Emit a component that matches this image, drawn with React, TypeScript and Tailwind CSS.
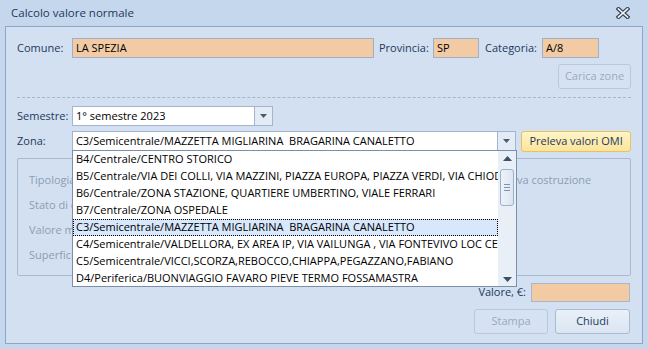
import React from "react";

const zones = [
  "B4/Centrale/CENTRO STORICO",
  "B5/Centrale/VIA DEI COLLI, VIA MAZZINI, PIAZZA EUROPA, PIAZZA VERDI, VIA CHIODO",
  "B6/Centrale/ZONA STAZIONE, QUARTIERE UMBERTINO, VIALE FERRARI",
  "B7/Centrale/ZONA OSPEDALE",
  "C3/Semicentrale/MAZZETTA MIGLIARINA  BRAGARINA CANALETTO",
  "C4/Semicentrale/VALDELLORA, EX AREA IP, VIA VAILUNGA , VIA FONTEVIVO LOC CERRETO",
  "C5/Semicentrale/VICCI,SCORZA,REBOCCO,CHIAPPA,PEGAZZANO,FABIANO",
  "D4/Periferica/BUONVIAGGIO FAVARO PIEVE TERMO FOSSAMASTRA",
];

const ArrowDown = () => (
  <svg width="7" height="4" viewBox="0 0 7 4">
    <path d="M0 0H7L3.5 4Z" fill="#4a5a70" />
  </svg>
);

const ArrowUp = () => (
  <svg width="9" height="5" viewBox="0 0 9 5">
    <path d="M0 5H9L4.5 0Z" fill="#3f4f66" />
  </svg>
);

const App = () => {
  const selected = 4;
  return (
    <div className="w-[648px] h-[349px] bg-[#c5d7ed] flex flex-col text-[11px] text-[#1e395b] overflow-hidden" style={{ fontFamily: "'Open Sans', 'Noto Sans', sans-serif" }}>
      {/* title bar */}
      <div className="h-[26px] flex items-center justify-between pl-[11px] pr-[18px] shrink-0">
        <span className="text-[11.5px] text-[#1e395b]">Calcolo valore normale</span>
        <svg width="14" height="12" viewBox="0 0 14 12">
          <path d="M2.5 2L11.5 10M11.5 2L2.5 10" stroke="#3b4658" strokeWidth="4" strokeLinecap="square" />
          <path d="M2.5 2L11.5 10M11.5 2L2.5 10" stroke="#f4f6f9" strokeWidth="1.6" strokeLinecap="square" />
        </svg>
      </div>

      {/* panel */}
      <div className="mx-[5px] h-[318px] border border-[#8ea6c6] bg-[#d3e0f1] pl-[11px] pr-[11px] pt-[11px] relative shrink-0">
        {/* row 1 */}
        <div className="flex items-center h-[20px]">
          <span className="w-[55px]">Comune:</span>
          <div className="w-[302px] h-[20px] bg-[#f2cba5] border border-[#9fb0c6] pl-[3px] flex items-center text-black">LA SPEZIA</div>
          <span className="w-[54px] ml-[5px]">Provincia:</span>
          <div className="w-[46px] h-[20px] bg-[#f2cba5] border border-[#9fb0c6] pl-[3px] flex items-center text-black">SP</div>
          <span className="w-[57px] ml-[6px]">Categoria:</span>
          <div className="w-[57px] h-[20px] bg-[#f2cba5] border border-[#9fb0c6] pl-[3px] flex items-center text-black">A/8</div>
        </div>

        <div className="flex justify-end mt-[6px]">
          <button className="w-[73px] h-[25px] rounded-[3px] border border-[#b9c8da] bg-[#d6e2f1] text-[#9aaabf]">Carica zone</button>
        </div>

        <div className="mt-[8px] border-t border-dashed border-[#a6b7ce]" />

        {/* semestre */}
        <div className="flex items-center mt-[8px] h-[20px]">
          <span className="w-[55px]">Semestre:</span>
          <div className="w-[201px] h-[20px] bg-white border border-[#a3b4cb] flex">
            <div className="flex-1 pl-[3px] flex items-center text-black">1° semestre 2023</div>
            <div className="w-[18px] border-l border-[#a3b4cb] bg-[#e3ebf6] flex items-center justify-center">
              <ArrowDown />
            </div>
          </div>
        </div>

        {/* zona */}
        <div className="flex items-center mt-[5px] h-[21px] relative">
          <span className="w-[55px]">Zona:</span>
          <div className="w-[445px] h-[20px] bg-white border border-[#a3b4cb] flex self-start">
            <div className="flex-1 pl-[3px] flex items-center text-black whitespace-pre overflow-hidden">{zones[selected]}</div>
            <div className="w-[18px] border-l border-[#a3b4cb] bg-[#e3ebf6] flex items-center justify-center">
              <ArrowDown />
            </div>
          </div>
          <button className="ml-[5px] w-[110px] h-[21px] rounded-[3px] border border-[#e7c35b] bg-gradient-to-b from-[#fef4c6] to-[#fce49a] text-[#1e395b]">Preleva valori OMI</button>

          {/* dropdown list */}
          <div className="absolute left-[55px] top-[19px] w-[445px] h-[137px] bg-white border border-[#7c8fa8] flex z-10">
            <div className="flex-1 overflow-hidden">
              {zones.map((z, i) => (
                <div
                  key={z}
                  className={
                    i === selected
                      ? "h-[17px] pl-[2px] flex items-center whitespace-pre text-black bg-[#d7e7fc] border border-dotted border-black"
                      : "h-[17px] pl-[3px] flex items-center whitespace-pre text-black"
                  }
                >
                  {z}
                </div>
              ))}
            </div>
            <div className="w-[18px] bg-[#e9eff7] flex flex-col items-center">
              <div className="h-[14px] flex items-center justify-center"><ArrowUp /></div>
              <div className="mt-[4px] w-[14px] h-[37px] rounded-[3px] border border-[#9bb0cc] bg-gradient-to-r from-[#eef3fa] to-[#dbe5f2] flex flex-col items-center justify-center gap-[2px]">
                <div className="w-[6px] h-px bg-[#7f93ae]" />
                <div className="w-[6px] h-px bg-[#7f93ae]" />
                <div className="w-[6px] h-px bg-[#7f93ae]" />
              </div>
              <div className="flex-1" />
              <div className="h-[14px] flex items-center justify-center">
                <svg width="9" height="5" viewBox="0 0 9 5"><path d="M0 0H9L4.5 5Z" fill="#3f4f66" /></svg>
              </div>
            </div>
          </div>
        </div>

        {/* group box (mostly covered by the open list) */}
        <div className="mt-[6px] h-[118px] border border-[#a8b9d0] rounded-[2px] text-[#8d9db4] flex">
          <div className="w-[54px] pl-[11px] pt-[13px] flex flex-col gap-[7px] overflow-hidden whitespace-nowrap">
            <div className="h-[18px] overflow-hidden">Tipologia</div>
            <div className="h-[18px] overflow-hidden">Stato di conservazione</div>
            <div className="h-[18px] overflow-hidden">Valore medio</div>
            <div className="h-[18px] overflow-hidden">Superficie</div>
          </div>
          <div className="ml-[445px] pt-[13px] whitespace-nowrap">va costruzione</div>
        </div>

        {/* valore */}
        <div className="flex items-center justify-end mt-[7px] h-[19px] pr-px">
          <span className="mr-[5px]">Valore, €:</span>
          <div className="w-[99px] h-[19px] bg-[#f2cba5] border border-[#a9b7c9]" />
        </div>

        {/* buttons */}
        <div className="flex justify-end gap-[7px] mt-[7px] pr-px">
          <button className="w-[74px] h-[25px] rounded-[3px] border border-[#b9c8da] bg-[#d6e2f1] text-[#9aaabf]">Stampa</button>
          <button className="w-[75px] h-[25px] rounded-[3px] border border-[#a9bbd3] bg-gradient-to-b from-[#eaf0f8] to-[#dbe5f2] text-[#1e395b]">Chiudi</button>
        </div>
      </div>
    </div>
  );
};

export default App;
